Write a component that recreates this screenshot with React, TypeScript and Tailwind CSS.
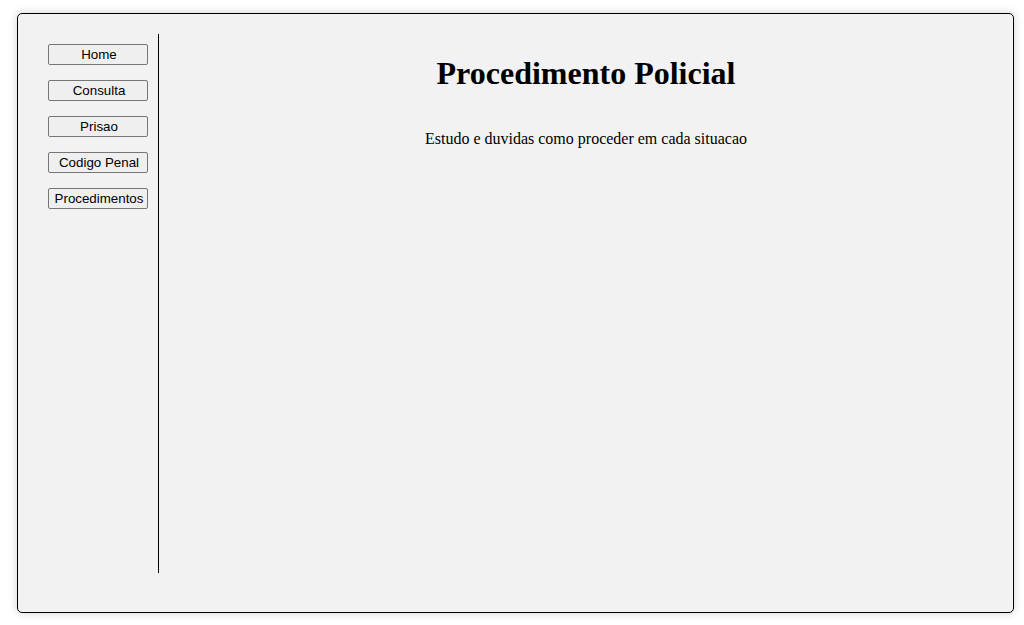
export default function App() {
  const items = ["Home", "Consulta", "Prisao", "Codigo Penal", "Procedimentos"];
  return (
    <div className="min-h-[625px] bg-white pt-[13px] pl-[17px]">
      <div className="w-[997px] h-[600px] border border-black rounded-[5px] bg-[#f2f2f2] shadow-[0_0_10px_rgba(0,0,0,0.18)] flex pt-[20px] pb-[39px]">
        <div className="w-[141px] border-r border-black pl-[30px] pt-[10px] flex flex-col gap-[15px]">
          {items.map((t) => (
            <button
              key={t}
              className="w-[100px] h-[21px] border border-[#767676] rounded-[2px] bg-[#efefef] text-black text-[13.33px] leading-[15px] pl-[2px] flex items-center justify-center whitespace-nowrap"
              style={{ fontFamily: '"Liberation Sans", Arial, sans-serif' }}
            >
              {t}
            </button>
          ))}
        </div>
        <div className="flex-1 text-center text-black" style={{ fontFamily: '"Liberation Serif", "Times New Roman", serif' }}>
          <h1 className="mt-[21px] text-[32px] leading-[37px] font-bold">Procedimento Policial</h1>
          <p className="mt-[38px] text-[16px] leading-[18px]">Estudo e duvidas como proceder em cada situacao</p>
        </div>
      </div>
    </div>
  );
}
